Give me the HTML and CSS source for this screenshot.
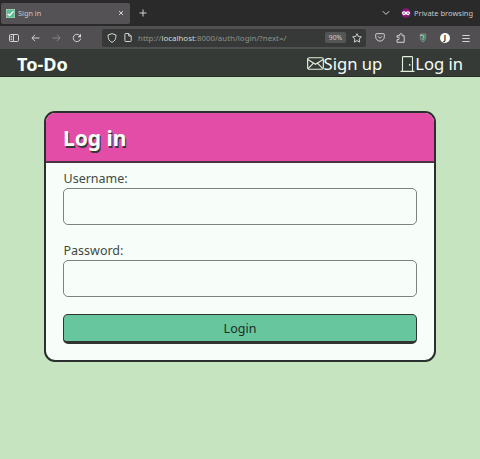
FILE: index.html
```html
<!DOCTYPE html>
<html lang="en">
<head>
<meta charset="utf-8">
<title>Sign in</title>
<link rel="stylesheet" href="styles.css">
</head>
<body>
<div class="tabs">
  <div class="tab">
    <svg class="favicon" viewBox="0 0 10 10"><rect width="10" height="10" fill="#59bd92"/><path d="M2 5.2 4 7.3 8.2 2.6" stroke="#fff" stroke-width="1.5"/></svg>
    <span class="tab-title">Sign in</span>
    <svg class="close" viewBox="0 0 6 6"><path d="m1 1 4 4M5 1 1 5"/></svg>
  </div>
  <svg class="plus" viewBox="0 0 8 8"><path d="M4 .5v7M.5 4h7"/></svg>
  <svg class="chevron" viewBox="0 0 8 6"><path d="m.8 1.2 3.2 3.2 3.2-3.2"/></svg>
  <svg class="mask" viewBox="0 0 10 10"><circle cx="5" cy="5" r="4.700" fill="#8c1675"/><path d="M1 4.200C2 2.900 4 2.900 5 4c1-1.100 3-1.100 4 .2 0 2-1 3.100-2.100 3.100C6 7.300 5.600 6.300 5 6.300s-1 1-1.900 1C2 7.300 1 6.200 1 4.200Z" fill="#fff"/><path d="M2.400 5.100h1.300M6.300 5.100h1.300" stroke="#8c1675" stroke-width="1.200"/></svg>
  <span class="private">Private browsing</span>
</div>
<div class="toolbar">
  <svg class="sidebar" viewBox="0 0 10 8"><rect x=".5" y=".5" width="9" height="7" rx="1.200"/><path d="M4.500.5v7M1.700 2.400h1.500M1.700 4h1.500M1.700 5.600h1.500"/></svg>
  <svg class="back" viewBox="0 0 9 8"><path d="M8.500 4H1M4 .8.900 4 4 7.200"/></svg>
  <svg class="forward" viewBox="0 0 9 8"><path d="M.5 4H8M5 .8 8.100 4 5 7.200"/></svg>
  <svg class="reload" viewBox="0 0 10 10"><path d="M8.600 5.500A3.700 3.700 0 1 1 7.700 2.500"/><path d="M9 .8v3.400H5.600Z" fill="#d9ddd6" stroke="none"/></svg>
  <div class="address">
    <svg class="shield" viewBox="0 0 10 10"><path d="M5 .6 9 2c.1 3.800-1.200 6.200-4 7.400C2.200 8.200.9 5.800 1 2Z"/></svg>
    <svg class="page" viewBox="0 0 8 9"><path d="M.9 1.200q0-.7.7-.7H4.700L7.200 3v4.800q0 .7-.7.700H1.600q-.7 0-.7-.7Z"/><path d="M4.700.5V3h2.500"/></svg>
    <span class="url">http://<b>localhost</b>:8000/auth/login/?next=/</span>
    <span class="zoom">90%</span>
    <svg class="star" viewBox="0 0 10 10"><path d="m5 .7 1.300 2.800 3.100.4-2.300 2.100.6 3.100L5 7.600 2.300 9.100l.6-3.100L.6 3.900l3.100-.4Z"/></svg>
  </div>
  <svg class="pocket" viewBox="0 0 10 9"><path d="M1.500.7h7q.8 0 .8.8v2.300a4.300 4.300 0 0 1-8.600 0V1.500q0-.8.8-.8Z"/><path d="m3 3.300 2 2 2-2"/></svg>
  <svg class="puzzle" viewBox="0 0 10 10"><path d="M1 9.300V6.600h1.100a1.200 1.200 0 0 0 0-2.400H1V2.700h2.600V1.900a1.300 1.300 0 0 1 2.600 0v.8h2v6.600Z"/></svg>
  <svg class="addon" viewBox="0 0 8 10"><path d="M1.300 1h5.400v4.500Q6.300 7.800 4 9 1.700 7.800 1.300 5.500Z" fill="#46745f" stroke="#7d8a80"/><path d="M1.300 2.300h3M4.800 2.500v3M3 5.500l1.500 1.200" stroke="#a9e0c1"/></svg>
  <span class="avatar">J</span>
  <svg class="menu" viewBox="0 0 8 8"><path d="M.3 1.500h7.400M.3 4.500h7.400M.3 7.500h7.400"/></svg>
</div>
<nav class="nav">
  <span class="brand">To-Do</span>
  <a class="link"><svg class="envelope" viewBox="0 0 16 12"><rect x=".6" y=".6" width="14.800" height="10.800" rx="1.600"/><path d="m.8 2.200 7.200 4.500 7.200-4.500M1 10.800l5.200-5.200M15 10.800 9.800 5.600"/></svg>Sign up</a>
  <a class="link login"><svg class="door" viewBox="0 0 15 16"><path d="M.5 15.400h14M2.500 15V1.500q0-.9.900-.9h8.200q.9 0 .9.900V15"/><circle cx="9.700" cy="8.800" r=".9" fill="#dff0da" stroke="none"/></svg>Log in</a>
</nav>
<main>
  <section class="card">
    <h1>Log in</h1>
    <form>
      <label for="username">Username:</label>
      <input id="username" type="text">
      <label for="password">Password:</label>
      <input id="password" type="password">
      <button type="button">Login</button>
    </form>
  </section>
</main>
</body>
</html>
```
FILE: styles.css
```css
* { box-sizing: border-box; }
body {
  margin: 0;
  height: 459px;
  overflow: hidden;
  background: #c6e4bf;
  font-family: "Noto Sans", sans-serif;
}
svg {
  display: block;
  flex: none;
  fill: none;
  stroke: #d0d4cd;
  stroke-width: 1;
}
.tabs {
  display: flex;
  align-items: center;
  height: 26px;
  padding-left: 1px;
  background: #292a29;
  color: #c8c9c7;
  font-size: 7.5px;
}
.tab {
  display: flex;
  align-items: center;
  width: 129px;
  height: 21px;
  padding: 0 6px 0 5px;
  border-radius: 2px;
  background: #555256;
}
.favicon { width: 9px; height: 9px; }
.tab-title { margin-left: 3px; flex: 1; font-size: 7.3px; }
.close { width: 6px; height: 6px; }
.plus { width: 8px; height: 8px; margin-left: 9px; }
.chevron { width: 8px; height: 6px; margin-left: 235px; }
.mask { width: 10px; height: 10px; margin-left: 11px; stroke: none; }
.private { margin-left: 3px; white-space: nowrap; }
.toolbar {
  display: flex;
  align-items: center;
  height: 23px;
  padding-left: 9px;
  background: #514f52;
}
.sidebar { width: 10px; height: 8px; }
.back { width: 9px; height: 8px; margin-left: 12px; }
.forward { width: 9px; height: 8px; margin-left: 12px; stroke: #858884; }
.reload { width: 10px; height: 10px; margin-left: 11px; }
.address {
  display: flex;
  align-items: center;
  width: 264px;
  height: 18px;
  margin-left: 20px;
  padding: 0 4px 0 5px;
  border-radius: 2px;
  background: #373938;
}
.shield { width: 10px; height: 10px; }
.page { width: 8px; height: 9px; margin-left: 7px; }
.url {
  flex: 1;
  margin-left: 6px;
  color: #8c9289;
  font-size: 7.9px;
  white-space: nowrap;
}
.url b { color: #d6dad3; font-weight: 400; }
.zoom {
  width: 21px;
  height: 11px;
  border-radius: 2px;
  background: #555557;
  color: #c9ccc7;
  font-size: 6.8px;
  line-height: 11px;
  text-align: center;
}
.star { width: 10px; height: 10px; margin-left: 6px; }
.pocket { width: 10px; height: 9px; margin-left: 9px; }
.puzzle { width: 10px; height: 10px; margin-left: 11px; }
.addon { width: 8px; height: 10px; margin-left: 13px; }
.avatar {
  width: 10px;
  height: 10px;
  margin-left: 13px;
  border-radius: 50%;
  background: #f5fff8;
  color: #222;
  font-size: 7px;
  font-weight: 700;
  line-height: 10px;
  text-align: center;
}
.menu { width: 8px; height: 8px; margin-left: 12px; }
.nav {
  display: flex;
  align-items: center;
  height: 28px;
  padding: 2px 17px 0 17px;
  border-bottom: 1px solid #272b28;
  background: #363a37;
  color: #f4fff7;
}
.brand { flex: 1; font-size: 18.1px; font-weight: 700; }
.link { display: flex; align-items: center; font-size: 16.6px; white-space: nowrap; }
.link svg { stroke: #dff0da; stroke-width: 1.1; }
.login { margin-left: 18px; }
.envelope { width: 17px; height: 13px; }
.door { width: 15px; height: 16px; }
main { padding: 34px 44px 0; }
.card {
  height: 251px;
  overflow: hidden;
  border: 2px solid #2b2f2d;
  border-radius: 11px;
  background: #f7fef9;
}
h1 {
  height: 50px;
  margin: 0;
  padding-left: 17px;
  border-bottom: 2px solid #493542;
  background: #e34da8;
  color: #f7fff9;
  font-size: 21px;
  line-height: 51px;
  text-shadow: 1px 2px 0 #343936;
}
form { display: flex; flex-direction: column; padding: 7px 17px 0; }
label { height: 18px; padding-left: .5px; color: #414943; font-size: 12.5px; line-height: 18px; }
input {
  width: 100%;
  height: 37px;
  margin: 0 0 17px;
  border: 1px solid #7b857e;
  border-radius: 5px;
  background: #f7fef9;
}
button {
  height: 30px;
  padding: 0;
  border: 1px solid #303532;
  border-bottom-width: 3px;
  border-radius: 5px;
  background: #67c69d;
  color: #202c26;
  font: 12.5px/28px "Noto Sans", sans-serif;
}
```
